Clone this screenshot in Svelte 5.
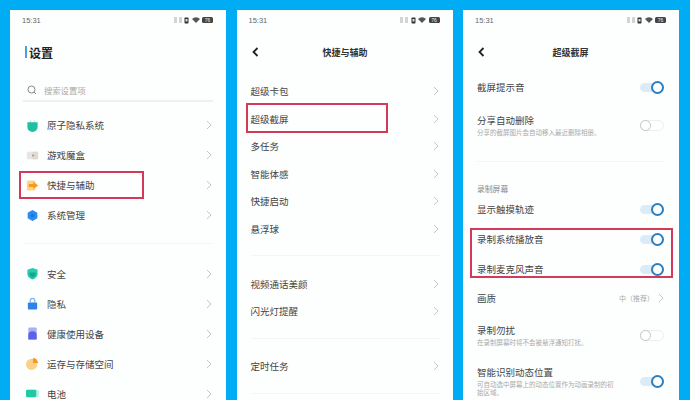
<script>
  const left1 = [
    { t: '原子隐私系统', i: 'atom' }, { t: '游戏魔盒', i: 'game' },
    { t: '快捷与辅助', i: 'quick', box: true }, { t: '系统管理', i: 'sys' }
  ];
  const left2 = [
    { t: '安全', i: 'safe' }, { t: '隐私', i: 'lock' }, { t: '健康使用设备', i: 'health' },
    { t: '运存与存储空间', i: 'store' }, { t: '电池', i: 'batt' }
  ];
  const mid = [
    [{ t: '超级卡包' }, { t: '超级截屏', box: true }, { t: '多任务' }, { t: '智能体感' }, { t: '快捷启动' }, { t: '悬浮球' }],
    [{ t: '视频通话美颜' }, { t: '闪光灯提醒' }],
    [{ t: '定时任务' }]
  ];
</script>

{#snippet status()}
  <div class="status">
    <span>15:31</span>
    <div class="status-icons">
      <svg width="8" height="6" viewBox="0 0 8 6"><path d="M0 1h3M0 3h3M0 5h3M5 1h3M5 3h3M5 5h3" stroke="#aaa" stroke-width="1" /></svg>
      <svg width="5" height="7" viewBox="0 0 5 7"><rect x=".5" y=".5" width="4" height="6" rx=".8" fill="#333" /><rect x="1.500" y="2" width="2" height="2.500" fill="#ddd" /></svg>
      <svg width="8" height="6" viewBox="0 0 8 6"><path d="M0 2a5.600 5.600 0 0 1 8 0L4 6z" fill="#555" /></svg>
      <span class="batt-chip">76</span>
    </div>
  </div>
{/snippet}

{#snippet chev()}
  <svg class="chev" width="6" height="10" viewBox="0 0 6 10"><path d="M1 1l4 4-4 4" fill="none" stroke="#c6c6c6" stroke-width="1" /></svg>
{/snippet}

{#snippet back()}
  <svg class="back" width="7" height="10" viewBox="0 0 7 10"><path d="M5.500 1L1.500 5l4 4" fill="none" stroke="#222" stroke-width="1.800" /></svg>
{/snippet}

{#snippet toggle(on)}
  <span class="toggle" class:on><span class="knob"></span></span>
{/snippet}

{#snippet icon(n)}
  <svg class="ico" width="13" height="13" viewBox="0 0 14 14">
    {#if n === 'atom'}
      <path d="M5 1.500v2M9 1.500v2" stroke="#bfe9de" stroke-width="1.500" />
      <path d="M1.500 3.500h11v5a5.500 5.500 0 0 1-11 0z" fill="#1fbf9f" />
    {:else if n === 'game'}
      <rect x="1" y="3" width="12" height="8" rx="1" fill="#e8e4e0" />
      <rect x="7" y="3" width="6" height="8" fill="#e2d8d0" />
      <circle cx="7.500" cy="7" r="1" fill="#a08f88" />
    {:else if n === 'quick'}
      <rect x="1" y="1.500" width="9" height="11" rx="1.500" fill="#fbd38a" />
      <path d="M3 5.500h5V3l5 4-5 4V8.500H3z" fill="#f79a1e" />
    {:else if n === 'sys'}
      <path d="M7 1l5.200 3v6L7 13l-5.200-3V4z" fill="#2b8cf0" />
      <circle cx="7" cy="7" r="2" fill="#1c76dc" />
    {:else if n === 'safe'}
      <path d="M7 1l5.500 2v4.500C12.500 10.500 9.500 12.500 7 13.500 4.500 12.500 1.500 10.500 1.500 7.500V3z" fill="#25cdb0" />
      <path d="M3.500 6h7v1.500C10.500 9.500 8.500 10.800 7 11.500 5.500 10.800 3.500 9.500 3.500 7.500z" fill="#14a78e" />
    {:else if n === 'lock'}
      <path d="M4.500 6V4a2.500 2.500 0 0 1 5 0v2" fill="none" stroke="#7fb2ee" stroke-width="1.300" />
      <rect x="2" y="6" width="10" height="7.500" rx="1" fill="#2f83e6" />
    {:else if n === 'health'}
      <rect x="2.500" y="0.500" width="9" height="13" rx="1" fill="#a9aef5" />
      <path d="M2.500 13.500V8.500a4.500 4 0 0 1 9 0v5z" fill="#5b62e8" />
    {:else if n === 'store'}
      <circle cx="6" cy="8" r="6" fill="#fcd08a" />
      <path d="M7.500 1a5.500 5.500 0 0 1 5.500 5.500H7.500z" fill="#f79a1e" />
    {:else if n === 'batt'}
      <rect x="0" y="3" width="14" height="8" rx="2" fill="#bdf0e3" />
      <rect x="0" y="3" width="11" height="8" rx="1.500" fill="#20c9a6" />
    {/if}
  </svg>
{/snippet}

<div class="stage">
  <section class="phone">
    {@render status()}
    <h1 class="big-title"><i class="caret"></i>设置</h1>
    <div class="search">
      <svg width="10" height="10" viewBox="0 0 10 10"><circle cx="4.500" cy="4.500" r="3.500" fill="none" stroke="#888" stroke-width="1" /><path d="M7 7l2 2" stroke="#888" stroke-width="1" /></svg>
      <span>搜索设置项</span>
    </div>
    <div class="group g1">
      {#each left1 as r}
        <div class="row lrow">
          {@render icon(r.i)}
          <span class="label">{r.t}</span>
          {@render chev()}
          {#if r.box}<i class="redbox b1"></i>{/if}
        </div>
      {/each}
    </div>
    <div class="divider d1"></div>
    <div class="group g2">
      {#each left2 as r}
        <div class="row lrow">
          {@render icon(r.i)}
          <span class="label">{r.t}</span>
          {@render chev()}
        </div>
      {/each}
    </div>
  </section>

  <section class="phone p2">
    {@render status()}
    <header class="nav">{@render back()}<span>快捷与辅助</span></header>
    {#each mid as g, gi}
      <div class="group mg" class:first={gi === 0}>
        {#each g as r}
          <div class="row mrow">
            <span class="label">{r.t}</span>
            {@render chev()}
            {#if r.box}<i class="redbox b2"></i>{/if}
          </div>
        {/each}
      </div>
      <div class="divider md"></div>
    {/each}
  </section>

  <section class="phone p3">
    {@render status()}
    <header class="nav">{@render back()}<span>超级截屏</span></header>
    <div class="settings">
      <div class="row srow">
        <span class="label">截屏提示音</span>{@render toggle(true)}
      </div>
      <div class="row srow tall">
        <div class="stack"><span class="label">分享自动删除</span><small>分享的截屏图片会自动移入最近删除相册。</small></div>
        {@render toggle(false)}
      </div>
      <div class="divider rd"></div>
      <div class="section">录制屏幕</div>
      <div class="row srow">
        <span class="label">显示触摸轨迹</span>{@render toggle(true)}
      </div>
      <div class="boxed">
        <div class="row srow"><span class="label">录制系统播放音</span>{@render toggle(true)}</div>
        <div class="row srow"><span class="label">录制麦克风声音</span>{@render toggle(true)}</div>
        <i class="redbox b3"></i>
      </div>
      <div class="row srow quality">
        <span class="label">画质</span>
        <span class="value">中（推荐）{@render chev()}</span>
      </div>
      <div class="row srow tall">
        <div class="stack"><span class="label">录制勿扰</span><small>在录制屏幕时将不会被悬浮通知打扰。</small></div>
        {@render toggle(false)}
      </div>
      <div class="row srow tall t3">
        <div class="stack"><span class="label">智能识别动态位置</span><small>可自动选中屏幕上的动态位置作为动画录制的初始区域。</small></div>
        {@render toggle(true)}
      </div>
    </div>
  </section>
</div>

<style>
  :global(body) { margin: 0; background: #00adf5; }
  .stage {
    width: 690px; height: 400px; overflow: hidden; box-sizing: border-box;
    background: #00adf5; display: flex; gap: 10.500px; padding: 10px 10px 0;
    font-family: "Noto Sans CJK SC", "Liberation Sans", sans-serif; color: #444;
  }
  .phone {
    width: 216px; height: 420px; flex: none; background: #fdfefe; box-sizing: border-box;
    padding: 0 13px;
  }
  .p2, .p3 { padding-left: 14px; }
  .p3 { padding-right: 15px; }
  .status {
    height: 20px; display: flex; align-items: center; justify-content: space-between;
    font-size: 7.500px; color: #666; font-family: "Liberation Sans", sans-serif;
    margin-left: -1px;
  }
  .p2 .status, .p3 .status { margin-left: -2px; }
  .p3 .status { margin-right: -2px; }
  .status-icons { display: flex; align-items: center; gap: 2.500px; }
  .batt-chip {
    width: 11px; height: 6px; background: #444; color: #eee; border-radius: 1.500px;
    font-size: 5px; line-height: 6px; text-align: center;
  }
  .big-title {
    margin: 12px 0 0 2px; height: 20px; display: flex; align-items: center;
    font-size: 12px; font-weight: 700; color: #222;
  }
  .caret { width: 2px; height: 12px; background: #4a9fe0; margin-right: 2px; }
  .search {
    margin-top: 18px; height: 20px; display: flex; align-items: center; gap: 7px;
    font-size: 8.300px; color: #aaa; border-bottom: 2px solid #eeeff0; padding-left: 4px;
  }
  .group { display: flex; flex-direction: column; }
  .g1 { margin-top: 8px; }
  .g2 { margin-top: 14.500px; }
  .row { display: flex; align-items: center; justify-content: space-between; position: relative; }
  .label { font-size: 9.500px; color: #444; line-height: 12px; flex: 1; white-space: nowrap; }
  .lrow { height: 30px; }
  .ico { flex: none; margin: 0 8px 0 3px; }
  .chev { flex: none; margin-right: 1px; }
  .divider { height: 1px; background: #f3f4f5; }
  .d1 { margin-top: 13px; }
  .nav {
    height: 24px; margin-top: 10px; position: relative; display: flex; align-items: center;
    justify-content: center; font-size: 9px; font-weight: 700; color: #333;
  }
  .back { position: absolute; left: 1px; top: 7px; }
  .mg { margin-top: 13.500px; }
  .mg.first { margin-top: 13.250px; }
  .mrow { height: 27.500px; }
  .md { margin-top: 13px; }
  .settings { margin-top: 8px; }
  .srow { height: 30px; }
  .tall { height: 38px; margin-top: 4px; }
  .quality { height: 28px; }
  .stack { display: flex; flex-direction: column; gap: 2.500px; min-width: 0; }
  .stack small { font-size: 6.500px; line-height: 8px; color: #aaa; max-width: 137px; }
  .rd { margin-top: 17px; }
  .section { font-size: 7.800px; color: #888; height: 12px; line-height: 12px; margin: 21px 0 -1px; }
  .boxed { position: relative; }
  .t3 { margin-top: 5px; height: 44px; }
  .value { display: flex; align-items: center; gap: 4px; font-size: 7px; color: #aaa; }
  .value .chev { margin-right: 0; }
  .toggle {
    width: 24px; height: 11px; border-radius: 6px; flex: none; position: relative;
    border: 1px solid #eceeef; box-sizing: border-box; background: #fff;
  }
  .toggle.on { background: #dcebf8; border-color: #dcebf8; height: 9px; }
  .knob {
    position: absolute; left: -1px; top: -1px; width: 11px; height: 11px; box-sizing: border-box;
    border: 1.500px solid #c4c4c4; border-radius: 50%; background: #fff;
  }
  .on .knob {
    left: auto; right: -1px; top: -3px; width: 13px; height: 13px;
    border-width: 2px; border-color: #2a7fc0;
  }
  .redbox { position: absolute; border: 2px solid #d33a5a; box-sizing: border-box; pointer-events: none; }
  .b1 { left: -4px; width: 125px; top: 1px; height: 28px; }
  .b2 { left: -5px; width: 142px; top: -2px; height: 30px; }
  .b3 { left: -7.500px; right: -9px; top: 4px; bottom: 6px; }
</style>
